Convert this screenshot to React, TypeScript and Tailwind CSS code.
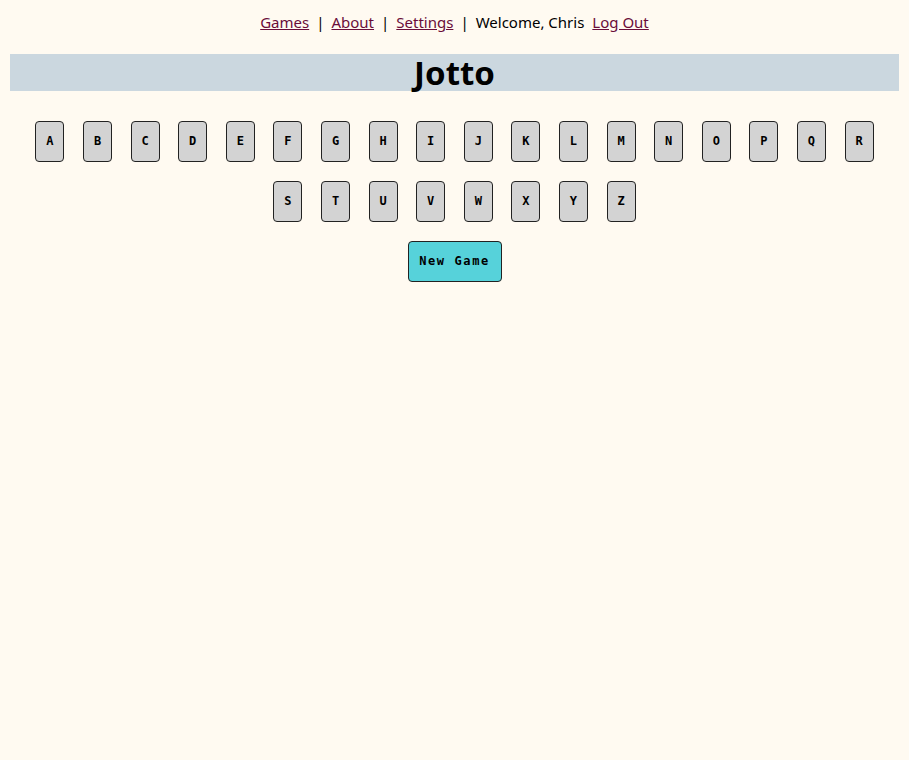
import React from "react";

const letters = "ABCDEFGHIJKLMNOPQRSTUVWXYZ".split("");

export default function App() {
  return (
    <div className="min-h-[760px] bg-[#fffaf1] text-black" style={{ fontFamily: "'Noto Sans', 'Open Sans', sans-serif" }}>
      <nav className="flex justify-center items-center pt-[10px] h-[34px] text-[15px] leading-[24px]">
        <a href="#" className="underline text-[#6a0d3a]">Games</a>
        <span className="mx-[7px]">|</span>
        <a href="#" className="underline text-[#6a0d3a]">About</a>
        <span className="mx-[7px]">|</span>
        <a href="#" className="underline text-[#6a0d3a]">Settings</a>
        <span className="mx-[7px]">|</span>
        <span>Welcome, Chris</span>
        <a href="#" className="underline text-[#6a0d3a] ml-[8px]">Log Out</a>
      </nav>
      <div className="mx-[10px] mt-[20px]">
        <h1 className="bg-[#cbd7df] h-[37px] flex items-center justify-center text-[33px] font-bold leading-none pb-[1px]">Jotto</h1>
        <div className="flex flex-wrap justify-center pt-[20px]">
          {letters.map((l) => (
            <button
              key={l}
              className="w-[29px] h-[41px] mx-[9.3px] my-[9.5px] bg-[#d3d3d3] border border-[#222] rounded-[4px] flex items-center justify-center text-[12px] font-bold text-black"
              style={{ fontFamily: "'DejaVu Sans Mono', monospace" }}
            >
              {l}
            </button>
          ))}
        </div>
        <div className="flex justify-center mt-[9.5px]">
          <button
            className="w-[94px] h-[41px] bg-[#56d2da] border border-[#222] rounded-[4px] flex items-center justify-center text-[12px] font-bold text-black tracking-[1.6px]"
            style={{ fontFamily: "'DejaVu Sans Mono', monospace" }}
          >
            New Game
          </button>
        </div>
      </div>
    </div>
  );
}
